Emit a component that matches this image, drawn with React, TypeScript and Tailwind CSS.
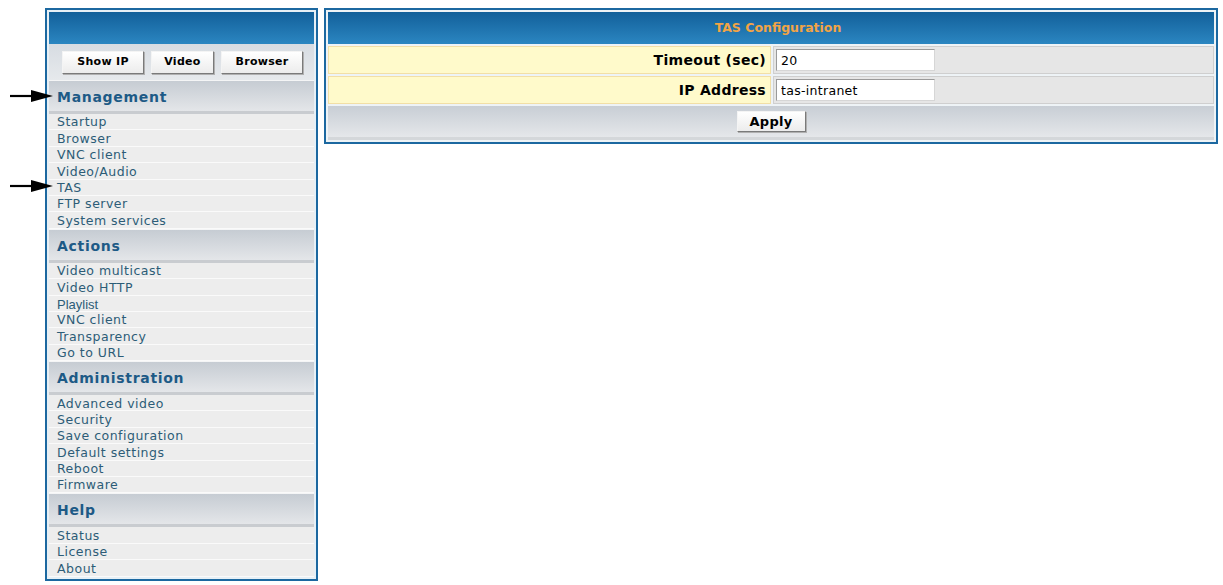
import React from "react";

const verdana = { fontFamily: '"DejaVu Sans", Verdana, sans-serif' };

type Item = { label: string; alt?: boolean };

const sections: { title: string; items: Item[] }[] = [
  {
    title: "Management",
    items: [
      { label: "Startup" },
      { label: "Browser" },
      { label: "VNC client" },
      { label: "Video/Audio" },
      { label: "TAS" },
      { label: "FTP server" },
      { label: "System services" },
    ],
  },
  {
    title: "Actions",
    items: [
      { label: "Video multicast" },
      { label: "Video HTTP" },
      { label: "Playlist", alt: true },
      { label: "VNC client" },
      { label: "Transparency" },
      { label: "Go to URL" },
    ],
  },
  {
    title: "Administration",
    items: [
      { label: "Advanced video" },
      { label: "Security" },
      { label: "Save configuration" },
      { label: "Default settings" },
      { label: "Reboot" },
      { label: "Firmware" },
    ],
  },
  {
    title: "Help",
    items: [{ label: "Status" }, { label: "License" }, { label: "About" }],
  },
];

function BevelButton({ label, className }: { label: string; className: string }) {
  return (
    <button
      className={`flex items-center justify-center bg-gradient-to-b from-[#ffffff] to-[#ececec] border border-t-[#f4f4f4] border-l-[#f4f4f4] border-r-[#7a7a7a] border-b-[#7a7a7a] shadow-[1px_1px_0_#b0b0b0] font-bold text-black ${className}`}
      style={verdana}
    >
      {label}
    </button>
  );
}

function SectionHeader({ title }: { title: string }) {
  return (
    <div className="flex flex-col h-[34px]">
      <div className="h-[1px] bg-[#f4f5f6]" />
      <div className="flex-1 flex items-center pl-2 pt-[3px] bg-gradient-to-b from-[#c6ccd3] to-[#e4e6e9]">
        <span className="text-[14px] font-bold tracking-[0.7px] text-[#1d5a86]">{title}</span>
      </div>
      <div className="h-[3px] bg-[#c9ccd0]" />
    </div>
  );
}

function Arrow({ top }: { top: number }) {
  return (
    <svg
      className="absolute left-[10px]"
      style={{ top }}
      width="44"
      height="14"
      viewBox="0 0 44 14"
    >
      <line x1="0" y1="7" x2="26" y2="7" stroke="#000" strokeWidth="2.2" />
      <polygon points="21,1 43,7 21,13" fill="#000" />
    </svg>
  );
}

export default function App() {
  return (
    <div className="relative min-h-[585px] bg-white" style={verdana}>
      <Arrow top={89} />
      <Arrow top={179} />
      <div className="flex items-start gap-[6px] pt-[8px] pl-[45px]">
        {/* navigation column */}
        <div className="w-[273px] border-2 border-[#1c68a0] p-[2px] bg-[#e7f0f6]">
          <div className="h-[32px] bg-gradient-to-b from-[#12609a] to-[#2b86c1]" />
          <div className="h-[36px] flex items-start gap-[7px] pl-[13px] pt-[7px] bg-gradient-to-b from-[#d7dce2] to-[#e6e9ec]">
            <BevelButton label="Show IP" className="w-[82px] h-[23px] text-[11px] tracking-[0.3px]" />
            <BevelButton label="Video" className="w-[63px] h-[23px] text-[11px] tracking-[0.3px]" />
            <BevelButton label="Browser" className="w-[82px] h-[23px] text-[11px] tracking-[0.3px]" />
          </div>
          {sections.map((s) => (
            <div key={s.title}>
              <SectionHeader title={s.title} />
              {s.items.map((it, i) => (
                <div
                  key={s.title + i}
                  className={`h-[16.4px] flex items-center pl-2 pt-[2px] bg-[#ededed] border-b border-[#fafafa] leading-none text-[#2c5c77] ${
                    it.alt ? "text-[13px]" : "text-[12.5px] tracking-[0.5px]"
                  }`}
                  style={it.alt ? { fontFamily: '"Liberation Sans", Arial, sans-serif' } : undefined}
                >
                  {it.label}
                </div>
              ))}
            </div>
          ))}
        </div>

        {/* configuration form */}
        <div className="w-[894px] border-2 border-[#1c68a0] p-[2px] bg-[#eef3f6] flex flex-col gap-[2px]">
          <div className="h-[32px] flex items-center justify-center pl-[14px] bg-gradient-to-b from-[#12609a] to-[#2b86c1]">
            <span className="text-[12.5px] font-bold text-[#f2a445]">TAS Configuration</span>
          </div>
          {[
            { label: "Timeout (sec)", value: "20" },
            { label: "IP Address", value: "tas-intranet" },
          ].map((r) => (
            <div key={r.label} className="h-[28px] flex gap-[2px]">
              <div className="w-[443px] flex items-center justify-end pr-[4px] bg-[#fffacb] border border-[#f2dfa6] text-[14px] tracking-[0.3px] font-bold text-black">
                {r.label}
              </div>
              <div className="flex-1 flex items-center pl-[2px] bg-[#e6e6e6] border border-[#cfcfcf]">
                <input
                  readOnly
                  value={r.value}
                  className="w-[159px] h-[22px] px-[4px] bg-white border border-t-[#9a9a9a] border-l-[#9a9a9a] border-r-[#d6d6d6] border-b-[#d6d6d6] text-[12.5px] tracking-[0.3px] text-black outline-none"
                  style={verdana}
                />
              </div>
            </div>
          ))}
          <div className="h-[34px] flex flex-col">
            <div className="flex-1 flex items-center justify-center bg-gradient-to-b from-[#c8ced5] to-[#e5e7ea]">
              <BevelButton label="Apply" className="w-[69px] h-[21px] text-[13px] tracking-[0.3px]" />
            </div>
            <div className="h-[3px] bg-[#d4d7da]" />
          </div>
        </div>
      </div>
    </div>
  );
}
